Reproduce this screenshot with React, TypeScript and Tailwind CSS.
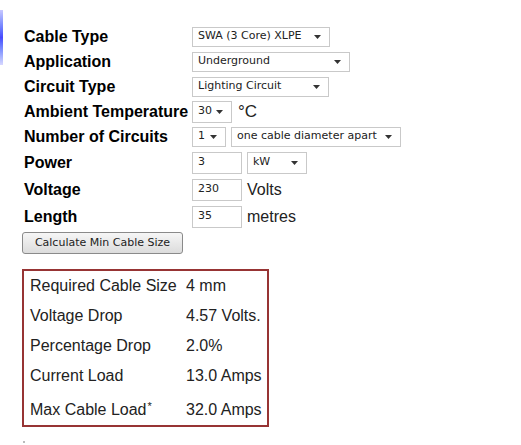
import React from 'react';

const ui = "font-['DejaVu_Sans',Tahoma,sans-serif] text-[11px] text-[#222]";

const Select: React.FC<{ value: string; width: string; height?: string }> = ({ value, width, height = 'h-[20px]' }) => (
  <div className={`${width} ${height} ${ui} flex items-center justify-between border border-[#c9c9c9] bg-white pl-[5px] pr-[8px]`}>
    <span className="whitespace-nowrap">{value}</span>
    <svg width="7" height="4" viewBox="0 0 7 4" className="shrink-0">
      <path d="M0 0 H7 L3.5 4 Z" fill="#333" />
    </svg>
  </div>
);

const TextBox: React.FC<{ value: string }> = ({ value }) => (
  <div className={`w-[50px] h-[22px] ${ui} flex items-center border border-[#c9c9c9] bg-white pl-[5px]`}>{value}</div>
);

const Row: React.FC<{ label: string; h: string; children: React.ReactNode }> = ({ label, h, children }) => (
  <div className={`flex items-center ${h}`}>
    <div className="w-[168px] font-bold text-[16px] text-black whitespace-nowrap">{label}</div>
    <div className="flex items-center gap-[5px]">{children}</div>
  </div>
);

const results = [
  { label: 'Required Cable Size', value: '4 mm' },
  { label: 'Voltage Drop', value: '4.57 Volts.' },
  { label: 'Percentage Drop', value: '2.0%' },
  { label: 'Current Load', value: '13.0 Amps' },
];

export default function App() {
  return (
    <div className="w-[521px] h-[445px] bg-white flex font-['Liberation_Sans',Arial,sans-serif] overflow-hidden">
      <div className="w-[3px] h-[55px] mt-[10px] bg-gradient-to-b from-[#c8c8ff] via-[#4848ff] to-[#d8d8ff]" />
      <div className="pl-[21px] pt-[24px] flex flex-col">
        <Row label="Cable Type" h="h-[25px]">
          <Select value="SWA (3 Core) XLPE" width="w-[138px]" />
        </Row>
        <Row label="Application" h="h-[25px]">
          <Select value="Underground" width="w-[158px]" />
        </Row>
        <Row label="Circuit Type" h="h-[25px]">
          <Select value="Lighting Circuit" width="w-[137px]" />
        </Row>
        <Row label="Ambient Temperature" h="h-[25px]">
          <Select value="30" width="w-[40px]" height="h-[22px]" />
          <span className="text-[17px] text-[#222] ml-[1px]">°C</span>
        </Row>
        <Row label="Number of Circuits" h="h-[25px]">
          <Select value="1" width="w-[34px]" />
          <Select value="one cable diameter apart" width="w-[170px]" />
        </Row>
        <Row label="Power" h="h-[27px]">
          <TextBox value="3" />
          <Select value="kW" width="w-[60px]" height="h-[22px]" />
        </Row>
        <Row label="Voltage" h="h-[27px]">
          <TextBox value="230" />
          <span className="text-[16px] text-[#222]">Volts</span>
        </Row>
        <Row label="Length" h="h-[27px]">
          <TextBox value="35" />
          <span className="text-[16px] text-[#222]">metres</span>
        </Row>
        <button className={`mt-[2px] -ml-[2px] w-[161px] h-[22px] ${ui} text-[#111] border border-[#8a8a8a] rounded-[3px] bg-gradient-to-b from-[#f6f6f6] to-[#dcdcdc]`}>
          Calculate Min Cable Size
        </button>
        <div className="mt-[15px] -ml-[2px] w-[247px] border-2 border-[#973434] pl-[6px] text-[16px] text-[#222]">
          {results.map((r) => (
            <div key={r.label} className="flex items-center h-[30px]">
              <div className="w-[156px] whitespace-nowrap">{r.label}</div>
              <div className="whitespace-nowrap">{r.value}</div>
            </div>
          ))}
          <div className="flex items-center h-[34px] pt-[4px]">
            <div className="w-[156px] whitespace-nowrap">
              Max Cable Load<sup className="text-[11px] relative -top-[5px] ml-[1px]">*</sup>
            </div>
            <div className="whitespace-nowrap">32.0 Amps</div>
          </div>
        </div>
        <div className="mt-[14px] -ml-[1px] w-[2px] h-[2px] bg-[#bbb]" />
      </div>
    </div>
  );
}
